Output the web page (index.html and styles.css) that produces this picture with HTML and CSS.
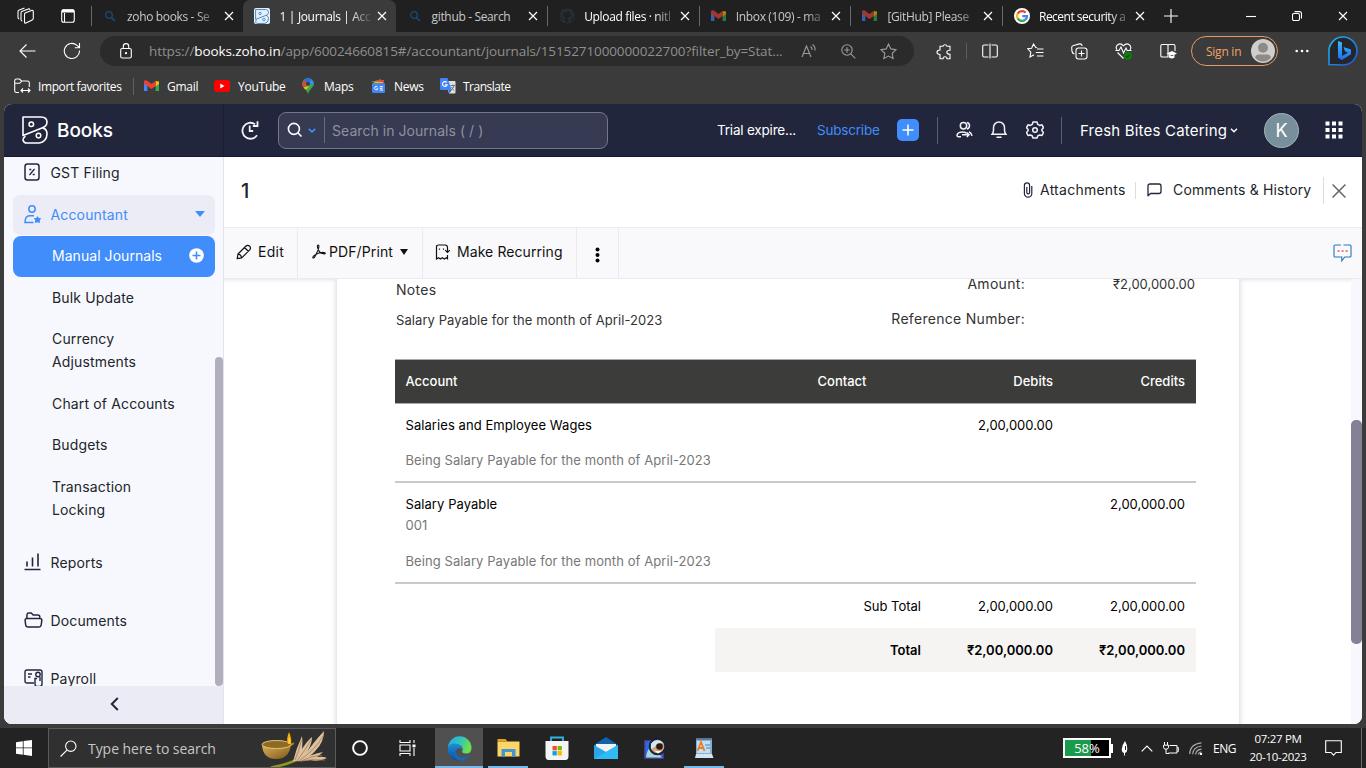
FILE: index.html
```html
<!DOCTYPE html>
<html lang="en">
<head>
<meta charset="utf-8">
<title>1 | Journals | Accountant</title>
<link rel="stylesheet" href="styles.css">
</head>
<body>
<svg width="0" height="0" class="defs" aria-hidden="true">
  <defs>
    <symbol id="x" viewBox="0 0 10 10"><path d="M1 1l8 8M9 1l-8 8" fill="none" stroke="currentColor" stroke-width="1.2"/></symbol>
    <symbol id="mag" viewBox="0 0 12 12"><circle cx="5" cy="5" r="3.3" fill="none" stroke="currentColor" stroke-width="1.3"/><path d="M7.4 7.4l3.4 3.4" stroke="currentColor" stroke-width="1.7"/></symbol>
    <symbol id="gmail" viewBox="0 0 15 12"><path d="M0 1.5V11h3.4V4z" fill="#4285f4"/><path d="M15 1.5V11h-3.4V4z" fill="#34a853"/><path d="M11.6 1L15 1.5V4l-3.4 2.5z" fill="#fbbc04"/><path d="M0 1.5C.2 0 2-.3 3.2.8L7.5 4l4.1-3.1v5L7.500 9 3.400 6 0 3.600z" fill="#ea4335"/></symbol>
    <symbol id="zb" viewBox="0 0 26 28"><path d="M1 1h18c4.500 0 6 2.500 6 5.300 0 3-2 4.700-5 5.700L1 19.500z" fill="none" stroke="currentColor" stroke-width="1.600" stroke-linejoin="round"/><path d="M20.500 11.900c3 .7 4.500 3 4.500 6 0 5-3.500 9.100-8 9.100H5c-4.500 0-5.200-5-1.500-6.800" fill="none" stroke="currentColor" stroke-width="1.600"/><circle cx="9.300" cy="8.300" r="2.300" fill="none" stroke="currentColor" stroke-width="1.500"/><circle cx="16.500" cy="19.600" r="2.300" fill="none" stroke="currentColor" stroke-width="1.500"/></symbol>
    <linearGradient id="bingRing" x1="0" y1="0" x2="1" y2="1"><stop offset="0" stop-color="#23b6e8"/><stop offset="1" stop-color="#1b56d8"/></linearGradient>
    <linearGradient id="bingB" x1="0" y1="0" x2="0" y2="1"><stop offset="0" stop-color="#37bdff"/><stop offset="1" stop-color="#1f6bf0"/></linearGradient>
    <linearGradient id="edgeG" x1="0" y1="0" x2="1" y2=".4"><stop offset="0" stop-color="#2aa9e0"/><stop offset=".5" stop-color="#2fc1c6"/><stop offset="1" stop-color="#6be04a"/></linearGradient>
    <linearGradient id="edgeB" x1="0" y1="0" x2="0" y2="1"><stop offset="0" stop-color="#1d8fd8"/><stop offset="1" stop-color="#0d4d9a"/></linearGradient>
    <linearGradient id="bowl" x1="0" y1="0" x2="1" y2="1"><stop offset="0" stop-color="#dcb25c"/><stop offset="1" stop-color="#7d5516"/></linearGradient>
  </defs>
</svg>

<header class="browser">
  <div class="tabstrip">
    <div class="tab-actions">
      <svg width="18" height="18" viewBox="0 0 18 18" class="line"><path d="M7.500 7.300q0-1.100 1.100-1.600l5.900-2.200q1.600-.5 1.800 1v6.800q0 1.200-1.100 1.700L9 16q-1.500.5-1.500-1zM5.300 14Q4 14 4 12.500V6q0-1.200 1.200-1.700L11.300 2q1.300-.4 1.700.8M2.200 12Q1 11.500 1 10.200V4.500q0-1.200 1.200-1.600L7.500 1"/></svg>
      <svg width="14" height="14" viewBox="0 0 14 14" class="line"><rect x=".7" y=".7" width="12.600" height="12.600" rx="2"/><path d="M1 2h12" stroke-width="3"/><path d="M3.500 4v9"/></svg>
    </div>
    <div class="tab"><svg width="12" height="12" class="fav navy"><use href="#mag"/></svg><span class="tab-title">zoho books - Se</span><svg width="10" height="10" class="close"><use href="#x"/></svg></div>
    <div class="tab active"><span class="fav books-fav"><svg width="14" height="15"><use href="#zb"/></svg></span><span class="tab-title">1 | Journals | Acc</span><svg width="10" height="10" class="close"><use href="#x"/></svg></div>
    <div class="tab"><svg width="12" height="12" class="fav navy"><use href="#mag"/></svg><span class="tab-title short">github - Search</span><svg width="10" height="10" class="close"><use href="#x"/></svg></div>
    <div class="tab lit"><svg width="16" height="16" viewBox="0 0 16 16" class="fav"><path d="M5.500 15v-2q-2.500.5-3-1.500M10.500 15v-3q0-1-.6-1.500Q13 10 13 6.800 13 5.500 12 4.300L11.900 2q-1 0-2.200.9-1.700-.5-3.500 0Q5 2 4 2l-.1 2.300Q3 5.500 3 6.800 3 10 6.100 10.500" fill="none" stroke="#273039" stroke-width="1.800"/><circle cx="8" cy="8" r="7" fill="none" stroke="#273039" stroke-width="1"/></svg><span class="tab-title">Upload files · nitl</span><svg width="10" height="10" class="close"><use href="#x"/></svg></div>
    <div class="tab"><svg width="15" height="12" class="fav dim"><use href="#gmail"/></svg><span class="tab-title">Inbox (109) - ma</span><svg width="10" height="10" class="close"><use href="#x"/></svg></div>
    <div class="tab"><svg width="15" height="12" class="fav dim"><use href="#gmail"/></svg><span class="tab-title">[GitHub] Please</span><svg width="10" height="10" class="close"><use href="#x"/></svg></div>
    <div class="tab lit"><svg width="16" height="16" viewBox="0 0 16 16" class="fav"><circle cx="8" cy="8" r="8" fill="#fff"/><g fill="none" stroke-width="2.300"><path d="M11.600 4.600A5 5 0 0 0 3.700 5.600" stroke="#ea4335"/><path d="M3.700 5.600a5 5 0 0 0 0 4.800" stroke="#fbbc05"/><path d="M3.700 10.400a5 5 0 0 0 7.600 1.300" stroke="#34a853"/><path d="M11.300 11.700A5 5 0 0 0 13 8.200H8.300" stroke="#4285f4"/></g></svg><span class="tab-title tight">Recent security a</span><svg width="10" height="10" class="close"><use href="#x"/></svg></div>
    <div class="newtab"><svg width="14" height="14" viewBox="0 0 14 14" class="line"><path d="M7 0v14M0 7h14"/></svg></div>
    <div class="win">
      <svg width="10" height="10" viewBox="0 0 10 10" class="line"><path d="M0 5.500h10"/></svg>
      <svg width="10" height="10" viewBox="0 0 10 10" class="line"><rect x=".5" y="2.500" width="7" height="7" rx="1.500"/><path d="M2.500.6h5q2 0 2 2v5"/></svg>
      <svg width="10" height="10" class="close"><use href="#x"/></svg>
    </div>
  </div>

  <div class="toolbar">
    <div class="nav">
      <svg width="17" height="14" viewBox="0 0 17 14" class="line"><path d="M16.500 7H1M7.500.5L1 7l6.500 6.500"/></svg>
      <svg width="18" height="18" viewBox="0 0 18 18" class="line"><path d="M16.500 8.500A7.600 7.600 0 1 1 14 3.300L16.500 5.600M16.500 1v4.700h-4.700"/></svg>
    </div>
    <div class="omnibox">
      <svg width="12" height="16" viewBox="0 0 12 16" class="line lock"><rect x=".7" y="5.500" width="10.600" height="9.500" rx="1.500"/><path d="M3.300 5.500V3.300a2.700 2.700 0 0 1 5.400 0v2.200"/><circle cx="6" cy="10.200" r=".6" fill="#fff"/></svg>
      <span class="url">https://<b>books.zoho.in</b>/app/60024660815#/accountant/journals/1515271000000022700?filter_by=Stat...</span>
      <div class="omni-icons">
        <svg width="16" height="16" viewBox="0 0 16 16" class="line"><path d="M1 14L5.500 3 10 14M2.500 10.500h6M9.500 3.500q1.600 1 1.600 3.500M11.500 1.500Q14.500 3.500 14 7.500"/></svg>
        <svg width="15" height="15" viewBox="0 0 15 15" class="line"><circle cx="6" cy="6" r="5.200"/><path d="M9.800 9.800l4.500 4.500M6 3.300v5.400M3.300 6h5.400"/></svg>
        <svg width="17" height="17" viewBox="0 0 17 17" class="line"><path d="M8.500 1l2.300 4.900 5.200.7-3.800 3.700.9 5.300-4.600-2.500-4.600 2.500.9-5.300L1 6.600l5.200-.7z"/></svg>
      </div>
    </div>
    <div class="tools">
      <svg width="16" height="17" viewBox="0 0 16 17" class="line"><path d="M5 3.200h2a2.100 2.100 0 0 1 4 0h3v4q-3.200 0-3.200 2t3.200 2v4.500h-3q0-2-2-2t-2 2H4V11.500Q1 11.300 1 9.200t3-2.200V3.200z"/></svg>
      <i class="sep"></i>
      <svg width="16" height="16" viewBox="0 0 16 16" class="line"><path d="M6.500 2H2Q.7 2 .7 3.500v9Q.7 14 2 14h4.500M9.500 2H14q1.300 0 1.300 1.500v9Q15.300 14 14 14H9.500M8 .5v15"/></svg>
      <svg width="17" height="16" viewBox="0 0 17 16" class="line"><path d="M10.200 4.800L8.800 4.600 6.500 1 4.600 5.200.8 5.800l3 3.300L3 14l4-2.300M10 6h6.500M8.800 9.500h7.700M10 13h6.500"/></svg>
      <svg width="17" height="17" viewBox="0 0 17 17" class="line"><path d="M3.500 11Q1.500 10.500 1 8.500L.7 5Q.5 3 2.500 2.500l6-1.600q2-.4 2.800 2"/><rect x="5" y="5" width="11" height="11" rx="2.500"/><path d="M10.500 7.500v6M7.500 10.500h6"/></svg>
      <svg width="17" height="17" viewBox="0 0 17 17" class="line"><path d="M2 7C-.5 3 4.500-1.500 8.500 2.800 12.500-1.500 17.500 3 15 7M.5 7.500H4L6 4l2.500 6L11 5l1.200 2.500h4.300M2.500 9.500l6 6"/><circle cx="12.800" cy="12.800" r="4" fill="#107c10" stroke="none"/><path d="M11 13l1.300 1.300 2.200-2.700" stroke="#0a4a0a"/></svg>
      <svg width="17" height="17" viewBox="0 0 17 17" class="line"><path d="M8 2.300V14H2.200Q.8 14 .8 12.700V3Q.8 1.500 2.200 1.500H7Q8 1.500 8 2.500q0-1 1-1h4.500Q15 1.500 15 3v5"/><path d="M6.500 10.500l5.500-2.500 5 2.500-5 2.500zM9 12v2.500q3 2 5.500 0V12" fill="#fff" stroke="none"/></svg>
      <div class="signin"><span>Sign in</span><svg width="24" height="24" viewBox="0 0 24 24"><circle cx="12" cy="12" r="12" fill="#d0cecb"/><circle cx="12" cy="8.800" r="5" fill="#8d8a87"/><path d="M4 18.500Q5 15.500 7.500 15.500h9q2.500 0 3.500 3-3 4-8 4t-8-4z" fill="#8d8a87"/></svg></div>
      <svg width="14" height="4" viewBox="0 0 14 4" class="dots"><circle cx="1.700" cy="2" r="1.300"/><circle cx="7" cy="2" r="1.300"/><circle cx="12.300" cy="2" r="1.300"/></svg>
      <svg width="32" height="32" viewBox="0 0 32 32"><path d="M2 29.500V15A14 14 0 1 1 16 30z" fill="#24262b" stroke="url(#bingRing)" stroke-width="1.700"/><path d="M11 6l4 1.500V21l6-3.300-3-1.500-1.500-4.200L24 14.500v4.700L15 25l-4-2.300z" fill="url(#bingB)"/></svg>
    </div>
  </div>

  <div class="bookmarks">
    <span class="bm import"><svg width="17" height="16" viewBox="0 0 17 16" class="line"><path d="M5 14.500H2.500Q.7 14.500.7 12.700V2.800Q.7 1 2.500 1h3L7.500 3h6q1.800 0 1.800 1.800V9M.7 5.300h5l2-2.200M7 12.500h9M9 10.500l-2 2 2 2M14 10.500l2 2-2 2"/></svg>Import favorites</span>
    <span class="bm gm"><svg width="15" height="12"><use href="#gmail"/></svg>Gmail</span>
    <span class="bm yt"><svg width="16" height="12" viewBox="0 0 16 12"><rect width="16" height="12" rx="3" fill="#f00"/><path d="M6.300 3.500v5L10.500 6z" fill="#fff"/></svg>YouTube</span>
    <span class="bm mp"><svg width="12" height="16" viewBox="0 0 12 16"><path d="M6 0a5.800 5.800 0 0 1 5.800 5.800C11.800 9.500 7.500 11 6 16 4.500 11 .2 9.500.2 5.800A5.800 5.800 0 0 1 6 0z" fill="#34a853"/><path d="M6 5.800L1.300 9.500Q.2 7.800.2 5.800L3 1z" fill="#ea4335"/><path d="M1.300 9.500L7.800 8l-4 3.800z" fill="#fbbc04"/><path d="M6 5.800L2.200 2A5.800 5.800 0 0 1 9.800 1.500z" fill="#1a73e8"/><path d="M9.800 1.500Q12 3.500 11.700 7L6 5.800z" fill="#4285f4"/><circle cx="6" cy="5.800" r="2" fill="#3c3c3c"/></svg>Maps</span>
    <span class="bm nw"><svg width="15" height="14" viewBox="0 0 15 14"><path d="M2 3l8-3 1 5z" fill="#34a853"/><path d="M4 1.500l9-.5v5z" fill="#ea4335"/><path d="M0 2.500l12 .5-1 3z" fill="#fbbc04"/><rect x="1" y="4" width="13" height="10" rx="1.200" fill="#4285f4"/><path d="M6.500 8a1.700 1.700 0 1 0 .3 1.800H5.500M8.800 7.700H12M8.800 9.300h2.700M8.800 11H12" stroke="#fff" stroke-width="1" fill="none"/></svg>News</span>
    <span class="bm tr"><svg width="16" height="16" viewBox="0 0 16 16"><path d="M6 3h8.500Q15.500 3 15.500 4v10.500q0 1-1 1H9z" fill="#dfe0e2"/><path d="M1 0h6.500l4.200 12H1.200Q0 12 0 10.800V1.200Q0 0 1 0z" fill="#4285f4"/><path d="M6.800 4.500A2.400 2.400 0 1 0 7.200 6.700H5" fill="none" stroke="#fff" stroke-width="1.100"/><path d="M10.500 7.500H15M12.800 6.500v1M14 7.500q-.5 3-3 4.500M11.500 9q1 2.500 2.800 3.500" stroke="#70757a" fill="none"/><path d="M8.700 12h3l-2.300 3.500z" fill="#3367d6"/></svg>Translate</span>
  </div>
</header>

<main class="app">
  <div class="app-head">
    <div class="brand"><svg width="26" height="28"><use href="#zb"/></svg><span>Books</span></div>
    <svg class="hist" width="20" height="20" viewBox="0 0 20 20"><path d="M17 15.300A8 8 0 1 1 15 4.200M17.500 1.300v4.700h-4.700M9.700 5.500v5.500h3.500" fill="none" stroke="#f1f1f6" stroke-width="1.800"/></svg>
    <div class="search"><svg width="16" height="16" viewBox="0 0 16 16"><circle cx="6.900" cy="6.900" r="5.500" fill="none" stroke="#fff" stroke-width="1.600"/><path d="M10.800 10.800l3.700 3.700" stroke="#fff" stroke-width="1.600"/></svg><svg class="sc" width="8" height="5" viewBox="0 0 8 5"><path d="M.8.8L4 3.800 7.200.8" fill="none" stroke="#408dfb" stroke-width="1.600"/></svg><i></i><span>Search in Journals ( / )</span></div>
    <div class="head-right">
      <span class="trial">Trial expire...</span>
      <span class="subscribe">Subscribe</span>
      <span class="plus"><svg width="12" height="12" viewBox="0 0 12 12"><path d="M6 .5v11M.5 6h11" stroke="#fff" stroke-width="1.500"/></svg></span>
      <i class="hsep"></i>
      <svg class="h1" width="17" height="18" viewBox="0 0 17 18"><g fill="none" stroke="#f1f1f6" stroke-width="1.500"><circle cx="7.500" cy="4.800" r="3.200"/><path d="M11 1.600a3.300 3.300 0 0 1 0 6.400M13 10.800q2.600 1.200 3 4.200M10.500 12Q6.500 10 3 11.600 1 12.600 1 14.200 1 15.800 3.500 15.800H5M6 13.800h6.800M10.800 11.600L13 13.800l-2.200 2.300"/></g></svg>
      <svg class="h2" width="16" height="18" viewBox="0 0 16 18"><g fill="none" stroke="#f1f1f6" stroke-width="1.500"><path d="M1 13.300Q2.500 12 2.500 9V6.500a5.500 5.500 0 0 1 11 0V9q0 3 1.500 4.300zM5.500 16.200h5"/></g></svg>
      <svg class="h3" width="18" height="18" viewBox="0 0 18 18"><g fill="none" stroke="#f1f1f6" stroke-width="1.500"><path d="M7 1h4l.7 2.300 2 1.100 2.300-.6 1.500 3-1.600 1.700v1.300l1.600 1.700-1.500 3-2.300-.6-2 1.100L11 17H7l-.7-2-2-1.100-2.300.6-1.500-3 1.600-1.700V8.500L.5 6.800l1.500-3 2.300.6 2-1.100z" stroke-linejoin="round"/><circle cx="9" cy="9" r="2.300"/></g></svg>
      <i class="hsep s2"></i>
      <span class="org">Fresh Bites Catering</span><svg class="oc" width="8" height="5" viewBox="0 0 8 5"><path d="M1 .8L4 3.800 7 .8" fill="none" stroke="#fff" stroke-width="1.400"/></svg>
      <span class="avatar">K</span>
      <svg class="apps" width="18" height="18" viewBox="0 0 18 18" fill="#fff"><path d="M.5.500h4v4h-4zM7 .500h4v4H7zM13.500.500h4v4h-4zM.500 7h4v4h-4zM7 7h4v4H7zM13.500 7h4v4h-4zM.500 13.500h4v4h-4zM7 13.500h4v4H7zM13.500 13.500h4v4h-4z"/></svg>
    </div>
  </div>

  <div class="app-body">
    <aside class="side">
      <nav class="side-list">
        <div class="top gst"><svg width="16" height="18" viewBox="0 0 16 18"><rect x="1" y="1" width="14" height="16" rx="2.500" fill="none" stroke="#21263c" stroke-width="1.500"/><path d="M10.500 6l-5 6M5.300 6.500h2M8.700 11.500h2" stroke="#21263c" stroke-width="1.300"/></svg>GST Filing</div>
        <div class="top acct"><svg width="18" height="19" viewBox="0 0 18 19"><g fill="none" stroke="#408dfb" stroke-width="1.500"><circle cx="8" cy="4" r="3.200"/><path d="M10 10.700H5.500Q1 10.700 1 17.500h8.500"/></g><path d="M13.500 11l1.300 1.900 2.500.4-1.500 2 .2 2.700-2.500-.8-2.500.8.200-2.700-1.500-2 2.500-.4z" fill="#408dfb"/></svg>Accountant<b></b></div>
        <div class="sub on">Manual Journals<svg width="15" height="15" viewBox="0 0 15 15"><circle cx="7.500" cy="7.500" r="7.300" fill="#fff"/><path d="M7.500 3.500v8M3.500 7.500h8" stroke="#408dfb" stroke-width="1.600"/></svg></div>
        <div class="sub bulk">Bulk Update</div>
        <div class="sub cur">Currency<br>Adjustments</div>
        <div class="sub chart">Chart of Accounts</div>
        <div class="sub bud">Budgets</div>
        <div class="sub trans">Transaction<br>Locking</div>
        <div class="top rep"><svg width="17" height="18" viewBox="0 0 17 18"><path d="M.5 16.500h16M3 13.500v-5M8.500 13.500V4.500M14 13.500V.500" stroke="#21263c" stroke-width="1.600"/></svg>Reports</div>
        <div class="top docs"><svg width="19" height="16" viewBox="0 0 19 16"><path d="M2.800 6.500L3 2.500Q3.200 1 4.700 1h2.500l2 2h4.600q2 0 2 2v1.500M3 6.500h13q2 0 1.800 2l-.6 4.500q-.3 2-2.200 2H4q-2 0-2.300-2L1.100 8.500q-.2-2 1.900-2z" fill="none" stroke="#21263c" stroke-width="1.500"/></svg>Documents</div>
        <div class="top pay"><svg width="19" height="18" viewBox="0 0 19 18"><g fill="none" stroke="#21263c" stroke-width="1.400"><path d="M10 14H3Q1 14 1 12V3Q1 1 3 1h13q2 0 2 2v12q0 2.500-2.500 2.500h-3q-1.500 0-1.500-3.500V9.500h2"/><circle cx="14" cy="5.500" r="2.200"/><path d="M16 8v4M4 5h4M4 8h2.500"/></g></svg>Payroll</div>
      </nav>
      <i class="side-thumb"></i>
      <div class="side-foot"><svg width="9" height="14" viewBox="0 0 9 14"><path d="M7.800 1L1.800 7l6 6" fill="none" stroke="#21263c" stroke-width="2"/></svg></div>
    </aside>

    <section class="content">
      <div class="title-row">
        <h1>1</h1>
        <svg class="clip" width="10" height="16" viewBox="0 0 10 16"><path d="M8.800 4v7.500a3.700 3.700 0 0 1-7.400 0V3.500a2.600 2.600 0 0 1 5.200 0v7a1.400 1.400 0 0 1-2.800 0V5" fill="none" stroke="#21263c" stroke-width="1.200"/></svg>
        <span class="att">Attachments</span><i></i>
        <svg class="cmt" width="15" height="14" viewBox="0 0 15 14"><path d="M1 12.800V3q0-2 2-2h9q2 0 2 2v5.500q0 2-2 2H3.500z" fill="none" stroke="#21263c" stroke-width="1.300" stroke-linejoin="round"/></svg>
        <span class="ch">Comments &amp; History</span><i class="tall"></i>
        <svg class="shut" width="14" height="14" viewBox="0 0 10 10"><path d="M.4.4l9.200 9.200M9.600.4L.4 9.600" stroke="#666" stroke-width="1.100"/></svg>
      </div>
      <div class="actions">
        <div class="act a1"><svg width="16" height="16" viewBox="0 0 16 16"><path d="M1.200 14.700L2 10 10 2q1.700-1.500 3.700.2 1.500 2 0 3.700l-8 8zM8.500 3.500l4 4M2.300 10.200q2.800.3 3.200 3.300" fill="none" stroke="#111" stroke-width="1.200" stroke-linejoin="round"/></svg>Edit</div>
        <div class="act a2"><svg width="14" height="16" viewBox="0 0 14 16"><path d="M6.200 1q-1.500.3-.3 3.500Q7 8 9.200 9.200q3.500 1 4 .5.500-1.300-2.500-1.300-4.700.2-8.400 3Q.3 13 1 14q1.200.5 3-3.500Q6.500 6 6.900 3 7 1 6.200 1z" fill="none" stroke="#111" stroke-width="1.100"/></svg>PDF/Print<b></b></div>
        <div class="act a3"><svg width="15" height="16" viewBox="0 0 15 16"><path d="M1.500 4v11l2-1.300L5.300 15l2-1.300 2 1.300 2-1.300 1.200 1V11M1.500 5V3q0-2 2-2H10q2.500 0 2.500 2.500V8M10.200 6.200l2.300 2.300 2.300-2.300M4.500 4.500v1.200M8.500 4.500v1.200" fill="none" stroke="#111" stroke-width="1.200"/></svg>Make Recurring</div>
        <div class="act a4"><svg width="5" height="16" viewBox="0 0 5 16"><circle cx="2.500" cy="2.400" r="2"/><circle cx="2.500" cy="8" r="2"/><circle cx="2.500" cy="13.600" r="2"/></svg></div>
        <svg class="chat" width="19" height="18" viewBox="0 0 19 18"><path d="M10.500 1H17q1 0 1 1v10q0 1-1 1h-5.200l-3 3.800V13H2q-1 0-1-1V2q0-1 1-1h6" fill="none" stroke="#2676bd" stroke-width="1.100"/><path d="M4.500 7h2M8.600 7h2M12.700 7h2" stroke="#e2565b" stroke-width="1.600"/></svg>
      </div>
      <div class="scroller">
        <article class="paper">
          <div class="meta">
            <div><p class="lbl">Notes</p><p class="note">Salary Payable for the month of April-2023</p></div>
            <dl><dt>Amount:</dt><dd>₹2,00,000.00</dd><dt class="ref">Reference Number:</dt><dd></dd></dl>
          </div>
          <div class="row thead"><span>Account</span><span>Contact</span><span class="r">Debits</span><span class="r">Credits</span></div>
          <div class="row item"><div><p class="name">Salaries and Employee Wages</p><p class="g gap">Being Salary Payable for the month of April-2023</p></div><span></span><span class="r">2,00,000.00</span><span></span></div>
          <div class="row item second"><div><p class="name">Salary Payable</p><p class="g">001</p><p class="g gap">Being Salary Payable for the month of April-2023</p></div><span></span><span></span><span class="r">2,00,000.00</span></div>
          <div class="sum"><span>Sub Total</span><span>2,00,000.00</span><span>2,00,000.00</span></div>
          <div class="sum total"><span>Total</span><span>₹2,00,000.00</span><span>₹2,00,000.00</span></div>
        </article>
        <i class="main-track"><i></i></i>
      </div>
    </section>
  </div>
</main>

<footer class="taskbar">
  <div class="start"><svg width="16" height="16" viewBox="0 0 16 16" fill="#fff"><path d="M0 2.200L6.800 1.200v6.300H0zM7.600 1.100L16 0v7.500H7.600zM0 8.300h6.800v6.400L0 13.800zM7.600 8.300H16V16l-8.400-1.200z"/></svg></div>
  <div class="tsearch"><svg width="17" height="17" viewBox="0 0 17 17" class="line"><circle cx="10.800" cy="6.200" r="5.200"/><path d="M7.200 9.900L.6 16.500"/></svg><span>Type here to search</span>
    <svg class="lamp" width="72" height="38" viewBox="0 0 72 38"><path d="M10 38.500Q24 36 33 32l5-4" stroke="#8f981c" stroke-width="2.500" fill="none"/><path d="M32 32.500Q35 20 41 7q1 6 0 13 5-8 10-12 0 7-5 15 6-9 17-21 0 11-8 19-4 5-7 6 8-3 14-4l-6 5q6-1 10 1-8 4-17 2-8 2-17 1z" fill="#dcbf9b"/><path d="M34 31Q38 22 40.500 11M36 32Q45 20 50 11M38 32Q55 20 62 7M40 32Q50 27 61 26M40 32q10-2 24-1" stroke="#a27d58" stroke-width=".8" fill="none"/><path d="M1 16Q2 30 15 30 28 30 30 16z" fill="url(#bowl)"/><path d="M27 15l6-1.500q1 2-5 4.500z" fill="#a9812f"/><ellipse cx="15.500" cy="15.500" rx="14.500" ry="4" fill="#8d6a26" stroke="#e6c470"/><path d="M27 15q-2-5 1-12 3 7 2 12z" fill="#ffae00"/><path d="M27.800 14.500q-.8-4 .3-6.500 1.400 4 .8 6.500z" fill="#ffe04a"/></svg>
  </div>
  <div class="task cortana"><svg width="18" height="18" viewBox="0 0 18 18"><circle cx="9" cy="9" r="6.900" fill="none" stroke="#fff" stroke-width="1.900"/></svg></div>
  <div class="task view"><svg width="18" height="16" viewBox="0 0 18 16" class="line"><path d="M1 0v2.500h10V0M1 16v-2.500h10V16M1 5h10v6H1zM15 0v3M15 8v8"/><path d="M13.500 4.500h3v2.800h-3z" fill="#fff" stroke="none"/></svg></div>
  <div class="task open cur"><svg width="25" height="25" viewBox="0 0 25 25"><path d="M1 12A11.700 11.700 0 0 1 24.500 12q0 5.500-5.500 5.500-5 0-3.500-3 1-5-4.500-5.500Q5 7.500 1 12z" fill="url(#edgeG)"/><path d="M.8 12.500C1 8 7 6.500 11 8q5 2 4 6-1.500-3-4.500-1.500-2.800 2-1 6Q12 24 20 21 12 27 5 22.500.8 19 .8 12.500z" fill="url(#edgeB)"/><path d="M10 13q-3 4 1 7 5 3.200 12-1.500-4 7-11 6Q2 20 10 13z" fill="#1768b6"/></svg></div>
  <div class="task open"><svg width="23" height="20" viewBox="0 0 23 20"><path d="M.5 1h8l2 2.500H.5z" fill="#e8a211"/><path d="M.5 3.500h22v15H.5z" fill="#ffd467"/><path d="M4.500 18.500V11h14v7.500H15V14H8v4.500z" fill="#3f97d6"/></svg></div>
  <div class="task"><svg width="24" height="24" viewBox="0 0 24 24"><path d="M6 6V1.500h12V6" fill="none" stroke="#31b4e6" stroke-width="1.800"/><path d="M.5 5h23v15q0 4-3 4h-17q-3 0-3-4z" fill="#f4f4f4"/><path d="M7.500 10h4.300v4.300H7.500z" fill="#f25022"/><path d="M12.600 10h4.300v4.300h-4.300z" fill="#7fba00"/><path d="M7.500 15.100h4.300v4.300H7.500z" fill="#00a4ef"/><path d="M12.600 15.100h4.300v4.300h-4.300z" fill="#ffb900"/></svg></div>
  <div class="task"><svg width="24" height="22" viewBox="0 0 24 22"><path d="M0 8L12 0l12 8v7H0z" fill="#0f63ae"/><path d="M2 7h20v9H2z" fill="#f2f2f2"/><path d="M0 8l12 7 12-7v14H0z" fill="#28a6e8"/><path d="M24 8v14H0z" fill="#2fbcf4"/></svg></div>
  <div class="task"><svg width="23" height="22" viewBox="0 0 23 22"><path d="M1 4h18v17H1z" fill="#2a6ae4" stroke="#5148b5" stroke-width="1.500"/><path d="M2 20.500q1-10 7-11l9 11z" fill="#a8d8da"/><circle cx="13.500" cy="9.500" r="7.800" fill="#cfa079" stroke="#182238" stroke-width="2"/><path d="M7 6.500q6-6.500 13 0-6-2-9 3l-4 3z" fill="#cceaf8"/><circle cx="15.500" cy="9.500" r="3.300" fill="#2a1a12"/><path d="M9 12.500q4 3 9 1l-4 3z" fill="#fff"/></svg></div>
  <div class="task open"><svg width="20" height="22" viewBox="0 0 20 22"><path d="M2 1h16v18H2z" fill="#87add4"/><path d="M3 4h13v12H3z" fill="#bfe1f5"/><path d="M2 1h16v2H2z" fill="#5b7799"/><path d="M3.500 14L7 5l3.500 9M5 11h4" fill="none" stroke="#ec7b22" stroke-width="1.800"/><path d="M11 8h5M12 11h4" stroke="#527ca7"/><path d="M2 17h16l1.500 4H1z" fill="#d6e4ef"/></svg></div>
  <div class="tray">
    <div class="battery"><span>58%</span></div><i class="nub"></i>
    <svg class="flame" width="7" height="16" viewBox="0 0 7 16"><path d="M4 1Q6.500 5 6.300 9q0 3-2.300 4v2.500H3V13Q.5 12 .7 9.500 1 5 4 1z" fill="#fff"/><path d="M4.500 6v4" stroke="#222"/></svg>
    <svg class="up" width="12" height="7" viewBox="0 0 12 7"><path d="M.7 6.300L6 1l5.300 5.300" fill="none" stroke="#fff" stroke-width="1.200"/></svg>
    <svg class="plug" width="16" height="13" viewBox="0 0 16 13"><path d="M6.500 3.500H14v7.500H5.500M14.300 5.500h1v4h-1M1.500 0v3M4.500 0v3M.5 3.200h5v2q0 2-2.500 2T.5 5.200zM3 7v4.500h3" fill="none" stroke="#fff"/></svg>
    <svg class="wifi" width="14" height="13" viewBox="0 0 14 13"><g fill="none" stroke="#aaa" stroke-width="1.200"><path d="M.7 12Q1 2 12.500.8M3.700 12.300Q4 5 12.500 4M6.700 12.500Q7 7.800 12.500 7.200M9.500 12.500q0-2.200 3-2.500" /></g><circle cx="12" cy="12" r="1.200" fill="#fff"/></svg>
    <span class="eng">ENG</span>
    <div class="clock"><span>07:27 PM</span><span>20-10-2023</span></div>
    <svg class="notif" width="17" height="16" viewBox="0 0 17 16"><path d="M.7.700h15.600v11.800H11l-2.500 2.700L6 12.500H.7z" fill="none" stroke="#fff" stroke-width="1.100"/></svg>
    <i class="peek"></i>
  </div>
</footer>
</body>
</html>
```
FILE: styles.css
```css
* { box-sizing: border-box; }
body { margin: 0; width: 1366px; height: 768px; overflow: hidden; background: #3b3b3b; font-family: Inter, "Open Sans", sans-serif; color: #212529; display: flex; flex-direction: column; }
p, h1, dl, dd { margin: 0; }
svg { flex: none; display: block; }
span { white-space: nowrap; }
.defs { position: absolute; }
.line { fill: none; stroke: #fff; stroke-width: 1.1; }

/* browser frame */
.browser { height: 104px; flex: none; font-family: "Open Sans", sans-serif; font-size: 12px; color: #fff; letter-spacing: -.25px; }
.tabstrip { height: 32px; background: #202020; display: flex; align-items: stretch; }
.tab-actions { width: 91px; display: flex; align-items: center; gap: 26px; padding-left: 17px; }
.tab { width: 151.600px; flex: none; display: flex; align-items: center; padding: 0 9px 0 12px; background: linear-gradient(#6a6a6a, #6a6a6a) 0 6px / 1px 20px no-repeat; color: #c9c9c9; }
.tab.active { width: 153px; background: #3b3b3b; border-radius: 7px 7px 0 0; color: #fff; }
.tab.active + .tab { background: none; }
.tab.lit { color: #fff; }
.tab-title { width: 93px; -webkit-mask-image: linear-gradient(90deg, #000 75%, transparent); mask-image: linear-gradient(90deg, #000 75%, transparent); margin-right: auto; letter-spacing: -.35px; }
.tab-title.tight { letter-spacing: -.5px; }
.tab-title.short { -webkit-mask-image: none; mask-image: none; }
.fav { margin-right: 9px; }
.fav.navy { color: #174a78; margin: 0 11px 0 1px; }
.fav.dim { opacity: .65; margin-right: 10px; }
.books-fav { width: 16px; height: 16px; background: #e4f0fb; color: #3478b8; display: grid; place-items: center; border-radius: 2px; margin-right: 10px; margin-left: -1px; }
.close { color: #fff; }
.newtab { width: 34px; display: grid; place-items: center; }
.win { flex: 1; display: flex; align-items: center; justify-content: flex-end; gap: 36px; padding-right: 18px; }
.toolbar { height: 38px; display: flex; align-items: center; }
.nav { width: 100px; display: flex; align-items: center; gap: 27px; padding-left: 19px; }
.omnibox { width: 814px; height: 30px; background: #2b2b2b; border-radius: 15px; display: flex; align-items: center; padding-left: 20px; }
.url { margin-left: 17px; width: 645px; font-size: 13.5px; color: #8f8f8f; letter-spacing: -.1px; }
.url b { font-weight: 400; color: #fff; }
.omni-icons { display: flex; align-items: center; gap: 24px; margin-left: 7px; }
.omni-icons .line { stroke: #9b9b9b; }
.tools { display: grid; grid-template-columns: 45px 1px 46px 44px 44px 44px 46px 87px 48px 34px; align-items: center; justify-items: center; margin-left: 7px; }
.sep { width: 1px; height: 16px; background: #5d5d5d; }
.signin { width: 87px; height: 30px; border: 1px solid #e9985f; border-radius: 15px; display: flex; align-items: center; justify-content: space-between; padding: 0 2px 0 14px; color: #f0a36b; }
.dots { fill: #fff; }
.bookmarks { height: 32px; display: flex; align-items: center; }
.bm { display: flex; align-items: center; white-space: nowrap; }
.import { width: 120px; margin-left: 14px; gap: 7px; border-right: 1px solid #606060; letter-spacing: -.4px; }
.gm { width: 70px; margin-left: 10px; gap: 8px; }
.yt { width: 88px; gap: 8px; }
.mp { width: 69px; gap: 10px; }
.nw { width: 69px; gap: 8px; }
.tr { gap: 7px; letter-spacing: -.5px; }

/* application shell */
.app { height: 620px; margin: 0 4px; border-radius: 8px; overflow: hidden; display: flex; flex-direction: column; background: #fff; flex: none; }
.app-head { height: 53px; flex: none; background: #21263c; border-bottom: 1px solid #16182c; display: flex; align-items: center; color: #fff; }
.brand { width: 220px; height: 53px; display: flex; align-items: center; padding-left: 18px; gap: 9px; font-size: 19px; font-weight: 500; letter-spacing: -.1px; border-right: 1px solid #1a1d33; }
.hist { margin-left: 16px; }
.search { width: 330px; height: 37px; margin-left: 18px; background: #363a53; border: 1px solid #73768a; border-radius: 8px; display: flex; align-items: center; padding-left: 8px; font-size: 14px; color: #8f919f; }
.search .sc { margin-left: 5px; }
.search i { width: 1px; height: 26px; background: #6a6d80; margin: 0 7px 0 8px; }
.search span { letter-spacing: .05px; }
.head-right { margin-left: 109px; display: flex; align-items: center; font-size: 13.5px; }
.trial { width: 100px; letter-spacing: -.2px; }
.subscribe { width: 80px; color: #408dfb; letter-spacing: -.2px; }
.plus { width: 22px; height: 22px; border-radius: 5px; background: #408dfb; display: grid; place-items: center; }
.hsep { width: 1px; height: 27px; background: #5a5d70; margin-left: 18px; }
.h1 { margin-left: 18px; }
.h2 { margin-left: 18px; }
.h3 { margin-left: 19px; }
.hsep.s2 { margin-left: 17px; }
.org { width: 150px; margin-left: 18px; font-size: 15px; letter-spacing: .2px; }
.avatar { width: 35px; height: 35px; border-radius: 50%; background: #78909c; border: 1px solid #a5b2b9; margin-left: 26px; display: grid; place-items: center; font-size: 18px; }
.apps { margin-left: 26px; }
.app-body { flex: 1; display: flex; min-height: 0; }

/* sidebar */
.side { width: 220px; flex: none; background: #f7f8fe; border-right: 1px solid #e2e3ec; position: relative; display: flex; flex-direction: column; font-size: 14px; letter-spacing: .15px; }
.side-list { height: 529px; overflow: hidden; padding: 0 8px 0 9px; }
.top { display: grid; grid-template-columns: 26.500px 1fr auto; align-items: center; padding: 0 0 2px 11px; }
.gst { height: 32px; margin-bottom: 6px; }
.acct { height: 40px; margin-bottom: 1px; background: #ececf7; border-radius: 7px; color: #408dfb; }
.acct b { border: 5px solid transparent; border-top: 6px solid #408dfb; border-bottom: 0; margin-right: 10px; }
.sub { padding: 0 0 2px 39px; line-height: 23px; display: flex; align-items: center; height: 42px; }
.on { height: 41px; background: #408dfb; border-radius: 8px; color: #fff; justify-content: space-between; padding-right: 11px; letter-spacing: .05px; }
.cur, .trans { height: 63px; }
.chart { height: 43px; padding-bottom: 0; }
.bud { height: 41px; }
.trans { height: 65px; }
.rep { height: 64px; }
.docs { height: 52px; }
.pay { height: 64px; }
.side-thumb { position: absolute; right: 0; top: 200px; width: 8px; height: 329px; border-radius: 4px; background: #b1aebd; }
.side-foot { height: 38px; background: #ebebf6; display: grid; place-items: center; padding: 0 0 2px 2px; }

/* record header */
.content { flex: 1; min-width: 0; display: flex; flex-direction: column; font-size: 14px; }
.title-row { height: 71px; flex: none; border-bottom: 1px solid #ebebf0; display: flex; align-items: center; padding: 0 16px 4px 17px; letter-spacing: .15px; }
.title-row span { padding-bottom: 1.500px; }
h1 { font-size: 20px; font-weight: 500; margin-right: auto; padding-top: 1px; }
.att { margin-left: 7px; width: 95px; letter-spacing: .25px; }
.title-row i { width: 1px; height: 17px; background: #ddd; }
.cmt { margin-left: 11px; }
.ch { margin-left: 11px; width: 150px; }
.title-row i.tall { height: 27px; }
.shut { margin: 2px 0 0 8px; }
.actions { height: 51px; flex: none; background: #f9f9fb; border-bottom: 1px solid #ebeaf2; display: flex; align-items: center; color: #111; }
.act { height: 50px; display: flex; align-items: center; border-right: 1px solid #ebeaf2; white-space: nowrap; padding-bottom: 2.500px; }
.a1 { width: 74px; padding-left: 12px; gap: 6px; letter-spacing: .3px; }
.a2 { width: 125px; padding-left: 14px; gap: 3px; letter-spacing: .1px; }
.a2 b { border: 4.500px solid transparent; border-top: 6.500px solid #111; border-bottom: 0; margin-left: 4px; }
.a3 { width: 154px; padding-left: 12px; gap: 7px; letter-spacing: .08px; }
.a4 { width: 42px; justify-content: center; padding: 3px 0 0; }
.chat { margin-left: auto; margin-right: 10px; }

/* journal document */
.scroller { flex: 1; min-height: 0; display: flex; overflow: hidden; justify-content: space-between; box-shadow: inset 0 4px 4px -3px #e4e4e4; }
.paper { width: 902px; margin-left: 113px; background: #fff; box-shadow: 0 0 6px #ccc; padding: 0 43px 0 58px; flex: none; font-size: 13px; color: #000; height: 460px; }
.meta { height: 80px; display: flex; justify-content: space-between; color: #333; }
.lbl { font-size: 14px; line-height: 20px; padding-left: 1px; letter-spacing: .3px; margin-top: 1px; }
.note { padding-left: 1px; margin-top: 10px; line-height: 20px; letter-spacing: .08px; }
.meta dl { display: grid; grid-template-columns: auto 170px; grid-auto-rows: 35px; text-align: right; line-height: 20px; margin-top: -5px; padding-right: 1px; }
.meta dt { font-size: 14px; letter-spacing: .3px; }
.row { display: grid; grid-template-columns: 412px 124px 132px 1fr; }
.row > * { padding: 0 10px 0 10.500px; }
.row > :last-child, .sum > :last-child { padding-right: 11px; }
.r { text-align: right; }
.thead { height: 45px; background: #3c3d3a; color: #fff; align-items: center; border-top: 1px solid #aaa; border-bottom: 1px solid #aaa; font-weight: 500; padding-bottom: 1px; }
.item { height: 79px; border-bottom: 2px solid #c9c9c9; line-height: 21px; padding-top: 11px; }
.name { letter-spacing: .07px; }
.item.second { height: 101px; }
.g { color: #777; }
.gap { margin-top: 14px; letter-spacing: .08px; }
.second .gap { margin-top: 15px; }
.sum { margin-left: 320px; display: grid; grid-template-columns: 216px 132px 1fr; height: 44px; align-items: center; text-align: right; }
.sum span { padding-right: 10px; }
.total { background: #f5f4f3; font-weight: 600; }
.main-track { width: 11px; background: #f7f8fe; padding-top: 141px; }
.main-track i { display: block; height: 224px; background: #848096; border-radius: 5px; }

/* desktop taskbar */
.taskbar { height: 40px; margin-top: 4px; background: #232323; display: flex; font-family: "Open Sans", sans-serif; color: #fff; flex: none; }
.start { width: 48px; display: grid; place-items: center; }
.tsearch { width: 288px; border: 1px solid #5b5b5b; background: #303030; display: flex; align-items: center; padding-left: 11px; gap: 11px; color: #c6c6c6; font-size: 14px; letter-spacing: -.05px; }
.lamp { margin-left: auto; margin-right: 2px; }
.task { width: 49px; display: grid; place-items: center; background: linear-gradient(#76b9ed, #76b9ed) 50% 100% / 0 0 no-repeat; }
.task.cortana { width: 48px; }
.task.view { width: 48px; margin-right: 3px; }
.task.open { background-size: 40px 2px; }
.task.cur { width: 48px; margin-right: .5px; height: 40px; background-color: #505050; background-size: 49px 2px; }
.tray { display: flex; align-items: center; margin-left: auto; padding-right: 4px; }
.battery { width: 48px; height: 20px; border: 2px solid #fff; background: linear-gradient(90deg, #1a9a4a 58%, #000 58%); font-size: 13px; display: grid; place-items: center; line-height: 15px; }
.nub { width: 2px; height: 9px; background: #fff; }
.flame { margin-left: 8px; }
.up { margin-left: 13px; }
.plug { margin-left: 10px; }
.wifi { margin-left: 10px; }
.eng { margin-left: 10px; width: 26px; font-size: 12px; letter-spacing: -.5px; }
.clock { width: 60px; margin-left: 9px; margin-right: 17px; display: flex; flex-direction: column; align-items: center; font-size: 11.500px; line-height: 18px; letter-spacing: -.3px; }
.peek { width: 1px; height: 40px; background: #6a6a6a; margin-left: 19px; }
```
